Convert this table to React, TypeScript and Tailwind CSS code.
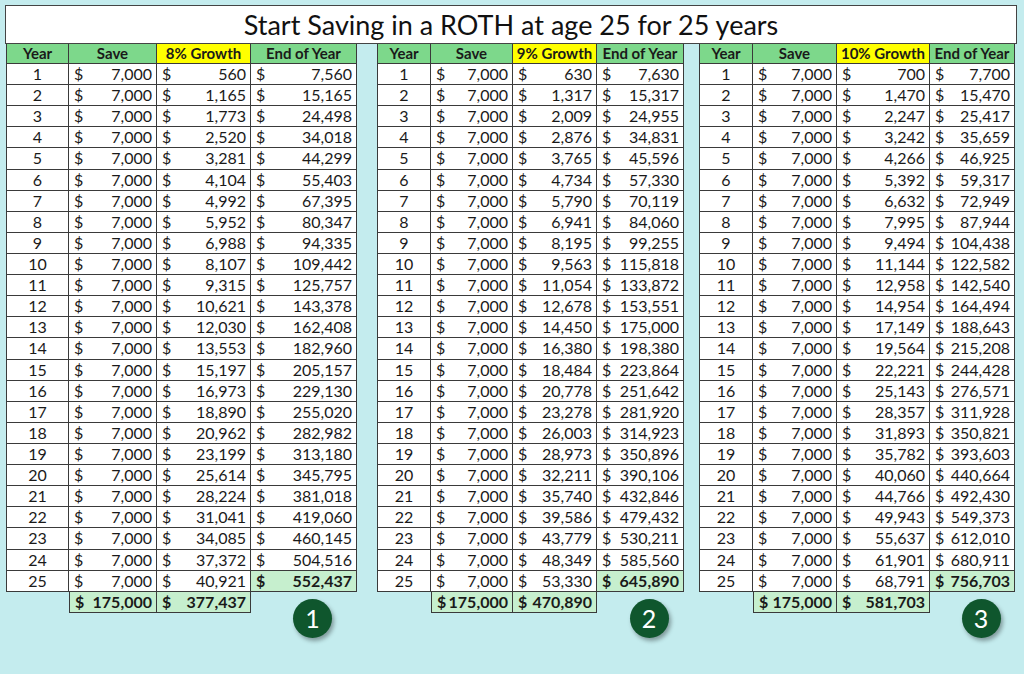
import React from 'react'

type Row = [number, number]

interface SheetProps {
  label: string
  cols: string
  rows: Row[]
  totals: [number, number]
  circle: string
}

const t1: Row[] = [
  [560, 7560], [1165, 15165], [1773, 24498], [2520, 34018], [3281, 44299],
  [4104, 55403], [4992, 67395], [5952, 80347], [6988, 94335], [8107, 109442],
  [9315, 125757], [10621, 143378], [12030, 162408], [13553, 182960], [15197, 205157],
  [16973, 229130], [18890, 255020], [20962, 282982], [23199, 313180], [25614, 345795],
  [28224, 381018], [31041, 419060], [34085, 460145], [37372, 504516], [40921, 552437],
]

const t2: Row[] = [
  [630, 7630], [1317, 15317], [2009, 24955], [2876, 34831], [3765, 45596],
  [4734, 57330], [5790, 70119], [6941, 84060], [8195, 99255], [9563, 115818],
  [11054, 133872], [12678, 153551], [14450, 175000], [16380, 198380], [18484, 223864],
  [20778, 251642], [23278, 281920], [26003, 314923], [28973, 350896], [32211, 390106],
  [35740, 432846], [39586, 479432], [43779, 530211], [48349, 585560], [53330, 645890],
]

const t3: Row[] = [
  [700, 7700], [1470, 15470], [2247, 25417], [3242, 35659], [4266, 46925],
  [5392, 59317], [6632, 72949], [7995, 87944], [9494, 104438], [11144, 122582],
  [12958, 142540], [14954, 164494], [17149, 188643], [19564, 215208], [22221, 244428],
  [25143, 276571], [28357, 311928], [31893, 350821], [35782, 393603], [40060, 440664],
  [44766, 492430], [49943, 549373], [55637, 612010], [61901, 680911], [68791, 756703],
]

const fmt = (n: number) => n.toLocaleString('en-US')

function Money({ value, bold = false }: { value: number; bold?: boolean }) {
  return (
    <div className={`flex h-full items-center justify-between pl-[5px] pr-[4px] ${bold ? 'font-bold' : ''}`}>
      <span>$</span>
      <span>{fmt(value)}</span>
    </div>
  )
}

function Sheet({ label, cols, rows, totals, circle }: SheetProps) {
  const head = 'flex h-[20px] items-center justify-center border-r border-b border-[#3a3a3a] text-[15px] font-bold'
  const cell = 'h-[21.12px] border-r border-b border-[#3a3a3a] bg-white'

  return (
    <div className={`grid ${cols} text-[16px] leading-none text-[#1a1a1a]`}>
      <div className={`${head} border-l bg-[#7dd88b]`}>Year</div>
      <div className={`${head} bg-[#7dd88b]`}>Save</div>
      <div className={`${head} bg-[#ffff00]`}>{label}</div>
      <div className={`${head} bg-[#7dd88b]`}>End of Year</div>

      {rows.map(([growth, end], i) => (
        <React.Fragment key={i}>
          <div className={`${cell} flex items-center justify-center border-l`}>{i + 1}</div>
          <div className={cell}><Money value={7000} /></div>
          <div className={cell}><Money value={growth} /></div>
          <div className={`${cell} ${i === 24 ? '!bg-[#c6efce]' : ''}`}>
            <Money value={end} bold={i === 24} />
          </div>
        </React.Fragment>
      ))}

      <div />
      <div className="h-[21px] border-l border-r border-b border-[#3a3a3a] bg-[#c6efce]">
        <Money value={totals[0]} bold />
      </div>
      <div className="h-[21px] border-r border-b border-[#3a3a3a] bg-[#c6efce]">
        <Money value={totals[1]} bold />
      </div>
      <div className="flex justify-center pl-[17px] pt-[7px]">
        <div className="flex h-[39px] w-[39px] items-center justify-center rounded-full bg-[#0f562d] text-[25px] text-white shadow-[2px_3px_4px_rgba(0,0,0,0.35)]">
          {circle}
        </div>
      </div>
    </div>
  )
}

export default function App() {
  return (
    <div className="h-[674px] w-[1024px] bg-[#c4ecee] pl-[5px] pt-[5px] font-['Lato','Open_Sans',sans-serif]">
      <div className="flex h-[39px] w-[1012px] items-center justify-center border border-[#444] bg-white pt-[1px] text-[27px] text-[#111]">
        Start Saving in a ROTH at age 25 for 25 years
      </div>
      <div className="flex pl-[1px]">
        <Sheet label="8% Growth" cols="grid-cols-[63px_88px_94px_106px]" rows={t1} totals={[175000, 377437]} circle="1" />
        <div className="w-[20px]" />
        <Sheet label="9% Growth" cols="grid-cols-[54px_82px_84px_87px]" rows={t2} totals={[175000, 470890]} circle="2" />
        <div className="w-[15px]" />
        <Sheet label="10% Growth" cols="grid-cols-[54px_84px_93px_85px]" rows={t3} totals={[175000, 581703]} circle="3" />
      </div>
    </div>
  )
}
